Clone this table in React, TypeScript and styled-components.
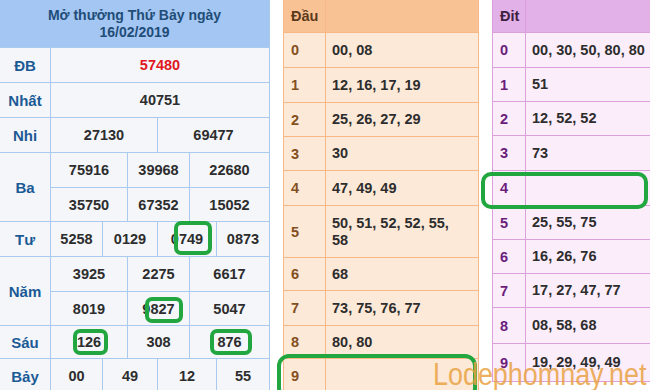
import React from "react";
import styled, { createGlobalStyle } from "styled-components";

const GlobalStyle = createGlobalStyle`
  html, body {
    margin: 0;
    padding: 0;
    background: #ffffff;
    font-family: "Liberation Sans", Arial, sans-serif;
  }
`;

const Page = styled.div`
  position: relative;
  width: 650px;
  height: 390px;
  overflow: hidden;
  display: flex;
  align-items: flex-start;
  background: #ffffff;
`;

/* ---------- bảng kết quả ---------- */

const ResultGrid = styled.div`
  flex: 0 0 auto;
  width: 270px;
  display: grid;
  grid-template-columns: 50px 51px 24px 29px 31px 26px 52px;
  grid-template-rows: 47px 34px 34px 34px 34px 33px 34px 34px 33px 32px 34px;
  gap: 1px;
  padding-right: 1px;
  box-sizing: border-box;
  background: #a9c9ee;
`;

const Title = styled.div`
  grid-column: 1 / -1;
  background: #a3c6f2;
  color: #1f4d78;
  font-weight: bold;
  font-size: 14px;
  line-height: 17px;
  display: flex;
  align-items: center;
  justify-content: center;
  text-align: center;
`;

const Label = styled.div<{ $rows?: number }>`
  grid-row: span ${(p) => p.$rows ?? 1};
  background: #f4f6fa;
  color: #1b5a95;
  font-weight: bold;
  font-size: 15px;
  display: flex;
  align-items: center;
  justify-content: center;
`;

const Num = styled.div<{ $span: number; $red?: boolean }>`
  grid-column: span ${(p) => p.$span};
  background: #f4f6fa;
  color: ${(p) => (p.$red ? "#e0171f" : "#2d2d2d")};
  font-weight: bold;
  font-size: 14.5px;
  display: flex;
  align-items: center;
  justify-content: center;
`;

/* ---------- bảng đầu / đít ---------- */

interface Palette {
  line: string;
  head: string;
  cell: string;
  headText: string;
  digit: string;
}

const orange: Palette = {
  line: "#f5b886",
  head: "#f9c294",
  cell: "#fde9d8",
  headText: "#5b3a1c",
  digit: "#83501f",
};

const purple: Palette = {
  line: "#dca0dc",
  head: "#e2b1e7",
  cell: "#fcedfb",
  headText: "#3d2140",
  digit: "#6b1d7c",
};

const LotoGrid = styled.div<{ $p: Palette; $cols: string; $rows: string; $w: number }>`
  flex: 0 0 auto;
  width: ${(p) => p.$w}px;
  margin-left: 13px;
  display: grid;
  grid-template-columns: ${(p) => p.$cols};
  grid-template-rows: ${(p) => p.$rows};
  gap: 1px;
  padding: 0 1px 1px 1px;
  box-sizing: border-box;
  background: ${(p) => p.$p.line};
`;

const HeadCell = styled.div<{ $p: Palette; $wide?: boolean }>`
  background: ${(p) => p.$p.head};
  color: ${(p) => p.$p.headText};
  font-weight: bold;
  font-size: 14.5px;
  display: flex;
  align-items: center;
  padding: 0 7px;
`;

const DigitCell = styled.div<{ $p: Palette }>`
  background: ${(p) => p.$p.cell};
  color: ${(p) => p.$p.digit};
  font-weight: bold;
  font-size: 14.5px;
  display: flex;
  align-items: center;
  padding: 0 7px;
`;

const ValueCell = styled.div<{ $p: Palette }>`
  background: ${(p) => p.$p.cell};
  color: #2d2d2d;
  font-weight: bold;
  font-size: 14.5px;
  line-height: 17px;
  display: flex;
  align-items: center;
  padding: 0 6px;
  white-space: pre-line;
`;

/* ---------- lớp phủ ---------- */

const Mark = styled.div<{ $x: number; $y: number; $w: number; $h: number; $r?: number }>`
  position: absolute;
  left: ${(p) => p.$x}px;
  top: ${(p) => p.$y}px;
  width: ${(p) => p.$w}px;
  height: ${(p) => p.$h}px;
  box-sizing: border-box;
  border: 4px solid #22a640;
  border-radius: ${(p) => p.$r ?? 7}px;
  pointer-events: none;
`;

const Watermark = styled.div`
  position: absolute;
  left: 433px;
  top: 359px;
  font-family: "Liberation Sans", Arial, sans-serif;
  font-size: 31px;
  line-height: 1;
  color: #e9a344;
  opacity: 0.85;
  transform: scaleX(0.868);
  transform-origin: left top;
  white-space: nowrap;
  pointer-events: none;
`;

const dau: [string, string][] = [
  ["0", "00, 08"],
  ["1", "12, 16, 17, 19"],
  ["2", "25, 26, 27, 29"],
  ["3", "30"],
  ["4", "47, 49, 49"],
  ["5", "50, 51, 52, 52, 55,\n58"],
  ["6", "68"],
  ["7", "73, 75, 76, 77"],
  ["8", "80, 80"],
  ["9", ""],
];

const dit: [string, string][] = [
  ["0", "00, 30, 50, 80, 80"],
  ["1", "51"],
  ["2", "12, 52, 52"],
  ["3", "73"],
  ["4", ""],
  ["5", "25, 55, 75"],
  ["6", "16, 26, 76"],
  ["7", "17, 27, 47, 77"],
  ["8", "08, 58, 68"],
  ["9", "19, 29, 49, 49"],
];

const LotoTable: React.FC<{
  title: string;
  rows: [string, string][];
  p: Palette;
  cols: string;
  heights: string;
  width: number;
}> = ({ title, rows, p, cols, heights, width }) => (
  <LotoGrid $p={p} $cols={cols} $rows={heights} $w={width}>
    <HeadCell $p={p}>{title}</HeadCell>
    <HeadCell $p={p} />
    {rows.map(([d, v]) => (
      <React.Fragment key={d}>
        <DigitCell $p={p}>{d}</DigitCell>
        <ValueCell $p={p}>{v}</ValueCell>
      </React.Fragment>
    ))}
  </LotoGrid>
);

const App: React.FC = () => {
  return (
    <>
      <GlobalStyle />
      <Page>
        <ResultGrid>
          <Title>
            Mở thưởng Thứ Bảy ngày
            <br />
            16/02/2019
          </Title>

          <Label>ĐB</Label>
          <Num $span={6} $red>57480</Num>

          <Label>Nhất</Label>
          <Num $span={6}>40751</Num>

          <Label>Nhi</Label>
          <Num $span={3}>27130</Num>
          <Num $span={3}>69477</Num>

          <Label $rows={2}>Ba</Label>
          <Num $span={2}>75916</Num>
          <Num $span={2}>39968</Num>
          <Num $span={2}>22680</Num>
          <Num $span={2}>35750</Num>
          <Num $span={2}>67352</Num>
          <Num $span={2}>15052</Num>

          <Label>Tư</Label>
          <Num $span={1}>5258</Num>
          <Num $span={2}>0129</Num>
          <Num $span={2}>0749</Num>
          <Num $span={1}>0873</Num>

          <Label $rows={2}>Năm</Label>
          <Num $span={2}>3925</Num>
          <Num $span={2}>2275</Num>
          <Num $span={2}>6617</Num>
          <Num $span={2}>8019</Num>
          <Num $span={2}>9827</Num>
          <Num $span={2}>5047</Num>

          <Label>Sáu</Label>
          <Num $span={2}>126</Num>
          <Num $span={2}>308</Num>
          <Num $span={2}>876</Num>

          <Label>Bảy</Label>
          <Num $span={1}>00</Num>
          <Num $span={2}>49</Num>
          <Num $span={2}>12</Num>
          <Num $span={1}>55</Num>
        </ResultGrid>

        <LotoTable
          title="Đầu"
          rows={dau}
          p={orange}
          cols="41px 152px"
          heights="32px 34px 34px 33px 33px 34px 51px 32px 34px 32px 34px"
          width={196}
        />

        <LotoTable
          title="Đit"
          rows={dit}
          p={purple}
          cols="32px 200px"
          heights="32px 34px 33px 33px 34px 34px 33px 33px 33px 35px 37px"
          width={236}
        />

        <Mark $x={174} $y={221} $w={38} $h={34} />
        <Mark $x={145} $y={297} $w={38} $h={26} />
        <Mark $x={73} $y={329} $w={35} $h={26} />
        <Mark $x={210} $y={329} $w={42} $h={26} />
        <Mark $x={277} $y={354} $w={200} $h={46} $r={12} />
        <Mark $x={481} $y={172} $w={167} $h={37} $r={10} />

        <Watermark>Lodephomnay.net</Watermark>
      </Page>
    </>
  );
};

export default App;
